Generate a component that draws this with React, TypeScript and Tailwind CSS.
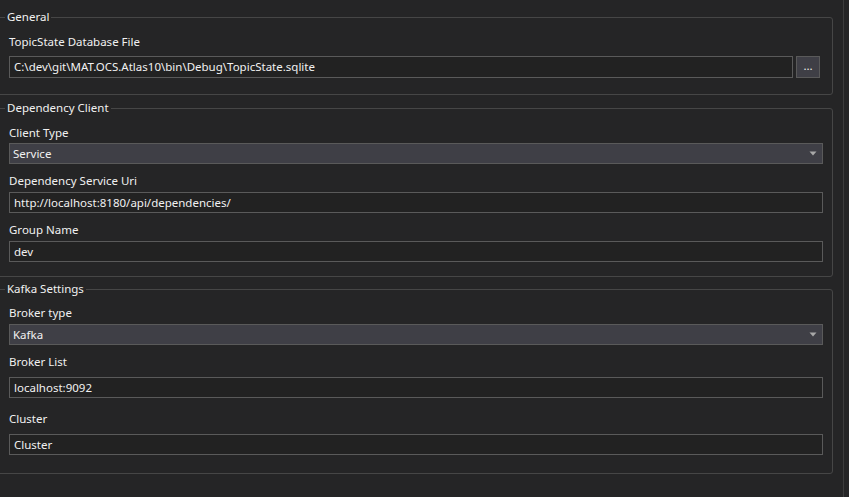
import React from "react";

function Label({ text, className }: { text: string; className: string }) {
  return (
    <div className={`h-[16px] leading-[16px] pl-[8px] text-[#f1f1f1] ${className}`}>{text}</div>
  );
}

function TextBox({ value, className }: { value: string; className: string }) {
  return (
    <div
      className={`ml-[8px] flex items-center border border-[#5a5a5a] bg-[#222222] pl-[4px] text-[#f1f1f1] ${className}`}
    >
      {value}
    </div>
  );
}

function ComboBox({ value, className }: { value: string; className: string }) {
  return (
    <div
      className={`ml-[8px] mr-[9px] flex items-center justify-between border border-[#5a5a5a] bg-[#3f3f46] pl-[3px] pr-[3px] text-[#f1f1f1] ${className}`}
    >
      <span>{value}</span>
      <svg width="8" height="5" viewBox="0 0 8 5" className="mr-[2px]">
        <path d="M0.5 0.5 H7.5 L4 4.5 Z" fill="#a8a8a8" />
      </svg>
    </div>
  );
}

function Group({
  title,
  className,
  children,
}: {
  title: string;
  className: string;
  children: React.ReactNode;
}) {
  return (
    <fieldset
      className={`-ml-[3px] mr-[10px] rounded-[3px] border border-[#464646] ${className}`}
    >
      <legend className="ml-[7px] h-[16px] px-[2px] leading-[16px] text-[#f1f1f1]">{title}</legend>
      <div className="pl-[3px]">{children}</div>
    </fieldset>
  );
}

export default function App() {
  return (
    <div
      className="flex h-[497px] w-[849px] overflow-hidden bg-[#252526] text-[11.5px]"
      style={{ fontFamily: '"Segoe UI", "Noto Sans", sans-serif' }}
    >
      <div className="w-[844px] shrink-0 border-r border-[#3c3c3c] pt-[9px]">
        <Group title="General" className="h-[86px]">
          <Label text="TopicState Database File" className="mt-[9px]" />
          <div className="mt-[6px] flex">
            <TextBox
              value="C:\dev\git\MAT.OCS.Atlas10\bin\Debug\TopicState.sqlite"
              className="mr-[3px] h-[22px] flex-1"
            />
            <div className="mr-[12px] flex h-[22px] w-[24px] items-center justify-center border border-[#5a5a5a] bg-[#3f3f46] pb-[3px] text-[#f1f1f1]">
              ...
            </div>
          </div>
        </Group>
        <Group title="Dependency Client" className="mt-[5px] h-[177px]">
          <Label text="Client Type" className="mt-[9px]" />
          <ComboBox value="Service" className="mt-[2px] h-[21px]" />
          <Label text="Dependency Service Uri" className="mt-[9px]" />
          <TextBox value="http://localhost:8180/api/dependencies/" className="mr-[9px] mt-[3px] h-[21px]" />
          <Label text="Group Name" className="mt-[9px]" />
          <TextBox value="dev" className="mr-[9px] mt-[3px] h-[21px]" />
        </Group>
        <Group title="Kafka Settings" className="mt-[4px] h-[193px]">
          <Label text="Broker type" className="mt-[8px]" />
          <ComboBox value="Kafka" className="mt-[3px] h-[21px]" />
          <Label text="Broker List" className="mt-[9px]" />
          <TextBox value="localhost:9092" className="mr-[9px] mt-[7px] h-[21px]" />
          <Label text="Cluster" className="mt-[13px]" />
          <TextBox value="Cluster" className="mr-[9px] mt-[7px] h-[21px]" />
        </Group>
      </div>
    </div>
  );
}
